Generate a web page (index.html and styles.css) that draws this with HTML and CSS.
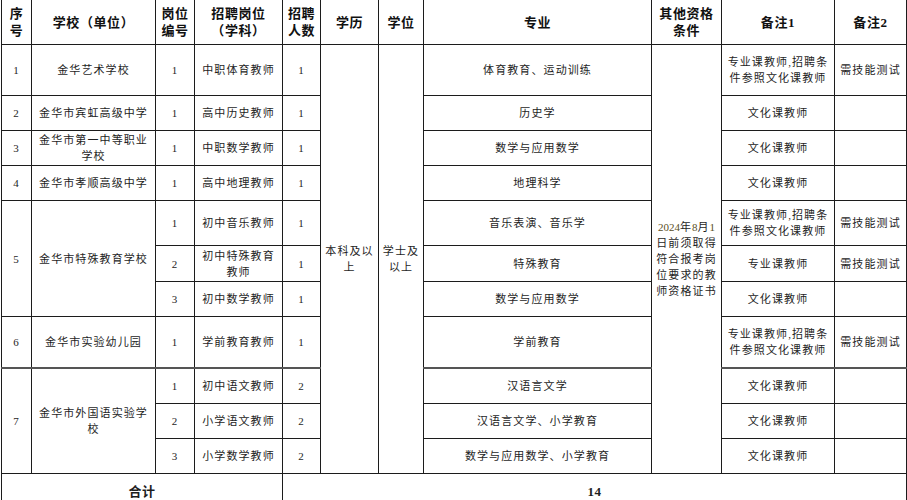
FILE: index.html
```html
<!DOCTYPE html>
<html lang="zh">
<head>
<meta charset="utf-8">
<title>招聘岗位表</title>
<link rel="stylesheet" href="styles.css">
</head>
<body>
<table class="grid">
  <colgroup>
    <col class="c-no"><col class="c-school"><col class="c-code"><col class="c-post"><col class="c-num">
    <col class="c-edu"><col class="c-deg"><col class="c-major"><col class="c-qual"><col class="c-r1"><col class="c-r2">
  </colgroup>
  <thead>
    <tr class="h-head">
      <th>序<br>号</th>
      <th>学校（单位）</th>
      <th>岗位<br>编号</th>
      <th>招聘岗位<br>（学科）</th>
      <th>招聘<br>人数</th>
      <th>学历</th>
      <th>学位</th>
      <th>专业</th>
      <th>其他资格<br>条件</th>
      <th>备注1</th>
      <th>备注2</th>
    </tr>
  </thead>
  <tbody>
    <tr class="h-51">
      <td>1</td>
      <td>金华艺术学校</td>
      <td>1</td>
      <td>中职体育教师</td>
      <td>1</td>
      <td rowspan="12">本科及以<br>上</td>
      <td rowspan="12">学士及<br>以上</td>
      <td>体育教育、运动训练</td>
      <td rowspan="12" class="qual"><span class="olive">2024</span>年<span class="olive">8</span>月<span class="olive">1</span><br>日前须取得<br>符合报考岗<br>位要求的教<br>师资格证书</td>
      <td>专业课教师,招聘条<br>件参照文化课教师</td>
      <td>需技能测试</td>
    </tr>
    <tr class="h-35">
      <td>2</td>
      <td>金华市宾虹高级中学</td>
      <td>1</td>
      <td>高中历史教师</td>
      <td>1</td>
      <td>历史学</td>
      <td>文化课教师</td>
      <td></td>
    </tr>
    <tr class="h-35">
      <td>3</td>
      <td>金华市第一中等职业<br>学校</td>
      <td>1</td>
      <td>中职数学教师</td>
      <td>1</td>
      <td>数学与应用数学</td>
      <td>文化课教师</td>
      <td></td>
    </tr>
    <tr class="h-35">
      <td>4</td>
      <td>金华市孝顺高级中学</td>
      <td>1</td>
      <td>高中地理教师</td>
      <td>1</td>
      <td>地理科学</td>
      <td>文化课教师</td>
      <td></td>
    </tr>
    <tr class="h-45">
      <td rowspan="3">5</td>
      <td rowspan="3">金华市特殊教育学校</td>
      <td>1</td>
      <td>初中音乐教师</td>
      <td>1</td>
      <td>音乐表演、音乐学</td>
      <td>专业课教师,招聘条<br>件参照文化课教师</td>
      <td>需技能测试</td>
    </tr>
    <tr class="h-36">
      <td>2</td>
      <td>初中特殊教育<br>教师</td>
      <td>1</td>
      <td>特殊教育</td>
      <td>专业课教师</td>
      <td>需技能测试</td>
    </tr>
    <tr class="h-35">
      <td>3</td>
      <td>初中数学教师</td>
      <td>1</td>
      <td>数学与应用数学</td>
      <td>文化课教师</td>
      <td></td>
    </tr>
    <tr class="h-51 thick">
      <td>6</td>
      <td>金华市实验幼儿园</td>
      <td>1</td>
      <td>学前教育教师</td>
      <td>1</td>
      <td>学前教育</td>
      <td>专业课教师,招聘条<br>件参照文化课教师</td>
      <td>需技能测试</td>
    </tr>
    <tr class="h-36">
      <td rowspan="3">7</td>
      <td rowspan="3">金华市外国语实验学<br>校</td>
      <td>1</td>
      <td>初中语文教师</td>
      <td>2</td>
      <td>汉语言文学</td>
      <td>文化课教师</td>
      <td></td>
    </tr>
    <tr class="h-35">
      <td>2</td>
      <td>小学语文教师</td>
      <td>2</td>
      <td>汉语言文学、小学教育</td>
      <td>文化课教师</td>
      <td></td>
    </tr>
    <tr class="h-35">
      <td>3</td>
      <td>小学数学教师</td>
      <td>2</td>
      <td>数学与应用数学、小学教育</td>
      <td>文化课教师</td>
      <td></td>
    </tr>
    <tr class="h-35 spacer"></tr>
  </tbody>
  <tfoot>
    <tr class="h-total">
      <td colspan="4" class="total">合计</td>
      <td colspan="7" class="total">14</td>
    </tr>
  </tfoot>
</table>
</body>
</html>
```

FILE: styles.css
```css
html, body {
  margin: 0;
  padding: 0;
  background: #ffffff;
}

body {
  width: 907px;
  height: 500px;
  overflow: hidden;
}

.grid {
  border-collapse: collapse;
  table-layout: fixed;
  width: 905px;
  margin: -1px 0 0 1px;
  font-family: "Liberation Serif", "Noto Sans CJK SC", serif;
  color: #1e1e1e;
}

.c-no { width: 30px; }
.c-school { width: 124px; }
.c-code { width: 39px; }
.c-post { width: 88px; }
.c-num { width: 38px; }
.c-edu { width: 58px; }
.c-deg { width: 45px; }
.c-major { width: 228px; }
.c-qual { width: 70px; }
.c-r1 { width: 113px; }
.c-r2 { width: 72px; }

.grid th,
.grid td {
  border: 1px solid #1c1c1c;
  padding: 0 2px;
  text-align: center;
  vertical-align: middle;
  overflow: hidden;
  white-space: nowrap;
}

.grid th {
  font-size: 13px;
  font-weight: bold;
  line-height: 17px;
  letter-spacing: 0.6px;
  color: #111;
}

.grid td {
  font-size: 11px;
  line-height: 16px;
  letter-spacing: 1.1px;
}

.h-head { height: 45px; }
.h-51 { height: 51px; }
.h-45 { height: 45px; }
.h-36 { height: 36px; }
.h-35 { height: 35px; }
.h-total { height: 40px; }

.spacer { display: none; }

.thick td {
  border-bottom: 2px solid #555;
}

.qual {
  font-size: 11.5px;
  letter-spacing: 1px;
}

.olive {
  color: #5a4f1e;
  letter-spacing: 0;
}

.grid td.total {
  font-size: 13px;
  font-weight: bold;
  letter-spacing: 0.5px;
  vertical-align: top;
  padding-top: 10px;
}
```
